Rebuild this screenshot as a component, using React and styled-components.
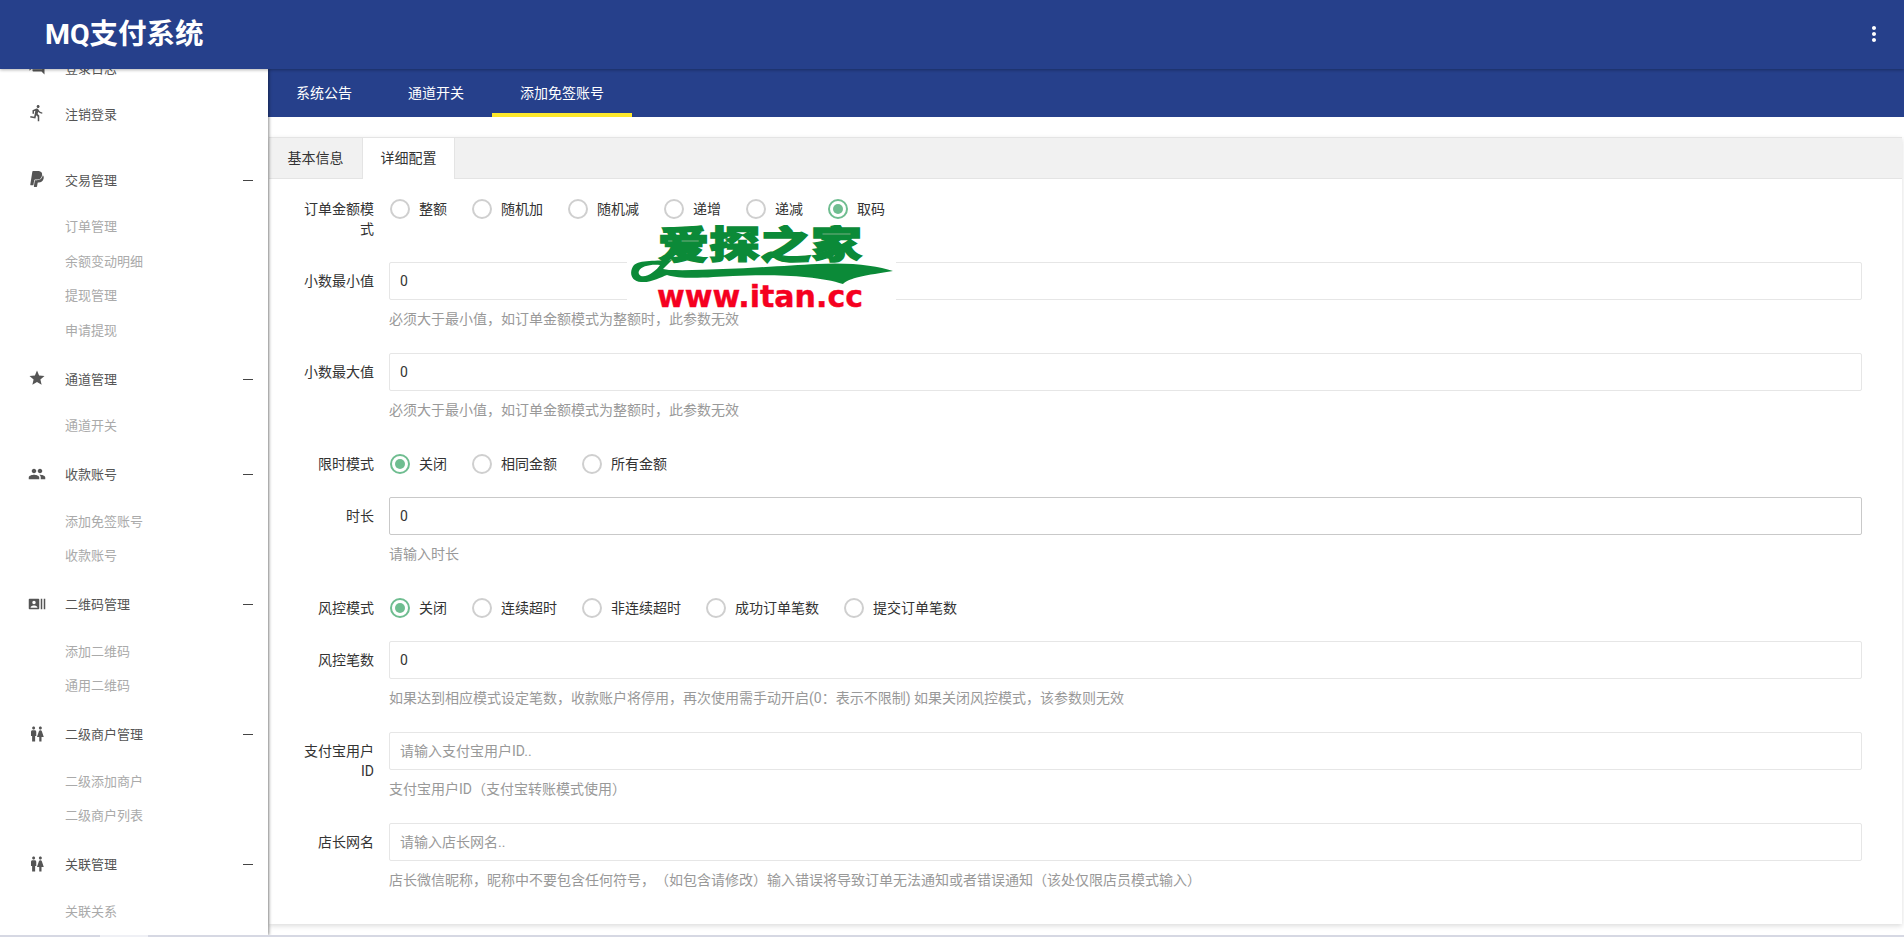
import React from "react";
import styled, { createGlobalStyle } from "styled-components";
import {
  MdDirectionsRun,
  MdForum,
  MdMoreVert,
  MdPeople,
  MdRecentActors,
  MdStar,
  MdWc,
} from "react-icons/md";
import { FaPaypal } from "react-icons/fa";

const GlobalStyle = createGlobalStyle`
  html, body, #root {
    margin: 0;
    height: 100%;
  }
  body {
    overflow: hidden;
    background: #fff;
    font-family: Roboto, "Noto Sans CJK SC", sans-serif;
    font-size: 14px;
    color: #333;
  }
  * {
    box-sizing: border-box;
  }
`;

const Page = styled.div`
  position: relative;
  display: flex;
  flex-direction: column;
  height: 937px;
  overflow: hidden;
`;

const Header = styled.header`
  position: relative;
  z-index: 3;
  flex: 0 0 68px;
  display: flex;
  align-items: center;
  justify-content: space-between;
  padding: 0 18px 0 45px;
  background: #26408b;
  color: #fff;
  box-shadow: 0 1px 3px rgba(0, 0, 0, 0.3);
`;

const Brand = styled.div`
  font-size: 28.5px;
  font-weight: 700;
  line-height: 68px;
  margin-top: 1px;
`;

const MenuButton = styled.div`
  display: flex;
  font-size: 24px;
  color: #fff;
  margin-top: -2px;
`;

const Body = styled.div`
  flex: 1;
  min-height: 0;
  display: flex;
`;

const Sidebar = styled.aside`
  position: relative;
  z-index: 2;
  flex: 0 0 268px;
  overflow: hidden;
  background: #fff;
  box-shadow: 1px 0 3px rgba(0, 0, 0, 0.45);
`;

const SideList = styled.nav`
  margin-top: -25px;
`;

const TopItem = styled.div`
  display: flex;
  align-items: center;
  height: 46px;
  padding-left: 28px;
  gap: 19px;
  font-size: 13px;
  color: #555;
  svg {
    flex: 0 0 18px;
    font-size: 18px;
  }
`;

const TopGroup = styled.div`
  margin-bottom: 26px;
`;

const GroupHead = styled(TopItem)`
  height: 34px;
  padding-right: 15px;
`;

const GroupName = styled.span`
  flex: 1;
`;

const Minus = styled.span`
  width: 10px;
  height: 1px;
  background: #444;
  margin-top: 2px;
`;

const SubList = styled.div`
  padding: 14px 0 13px 65px;
`;

const SubItem = styled.div`
  height: 34.5px;
  line-height: 34.5px;
  font-size: 13px;
  color: #aaa;
`;

const Main = styled.main`
  flex: 1;
  min-width: 0;
  overflow: hidden;
`;

const SubNav = styled.div`
  display: flex;
  height: 48px;
  background: #26408b;
`;

const SubNavLink = styled.a`
  display: block;
  padding: 0 28px;
  height: 48px;
  line-height: 48px;
  font-size: 14px;
  color: #fff;
  border-bottom: ${(p) => (p.$active ? "4px solid #fde82b" : "none")};
`;

const Card = styled.section`
  margin: 20px 2px 0 1px;
  background: #fff;
  box-shadow: 0 2px 5px rgba(0, 0, 0, 0.14);
`;

const TabBar = styled.div`
  display: flex;
  height: 42px;
  background: #f1f1f1;
  border-top: 1px solid #e4e4e4;
  border-bottom: 1px solid #e4e4e4;
`;

const Tab = styled.div`
  width: 93px;
  height: ${(p) => (p.$active ? "41px" : "40px")};
  line-height: 40px;
  text-align: center;
  font-size: 14px;
  color: #333;
  background: ${(p) => (p.$active ? "#fff" : "transparent")};
  border-left: 1px solid ${(p) => (p.$active ? "#e4e4e4" : "transparent")};
  border-right: 1px solid ${(p) => (p.$active ? "#e4e4e4" : "transparent")};
`;

const Form = styled.form`
  padding: 10px 40px 10px 30px;
`;

const Row = styled.div`
  display: grid;
  grid-template-columns: 75px 1fr;
  column-gap: 15px;
  margin-bottom: ${(p) => (p.$radio ? "23px" : "24px")};
  padding-top: ${(p) => (p.$radio ? "10px" : "0")};
`;

const Label = styled.label`
  display: block;
  text-align: right;
  font-size: 14px;
  line-height: 20px;
  color: #333;
  padding-top: ${(p) => (p.$radio ? "0" : "9px")};
`;

const TextInput = styled.input`
  display: block;
  width: 100%;
  height: 38px;
  padding: 0 10px;
  font: inherit;
  color: #333;
  background: #fff;
  border: 1px solid ${(p) => (p.$focused ? "#c9c9c9" : "#e6e6e6")};
  border-radius: 2px;
  outline: none;
  &::placeholder {
    color: #999;
    opacity: 1;
  }
`;

const Help = styled.div`
  margin-top: 9px;
  font-size: 14px;
  line-height: 20px;
  color: #999;
  text-spacing-trim: space-all;
`;

const RadioGroup = styled.div`
  display: flex;
  margin-left: 1px;
  height: 20px;
`;

const RadioItem = styled.div`
  display: flex;
  align-items: center;
  gap: 9px;
  margin-right: 25px;
  font-size: 14px;
  line-height: 20px;
  color: #333;
`;

const RadioMark = styled.span`
  position: relative;
  width: 20px;
  height: 20px;
  border-radius: 50%;
  border: 2px solid ${(p) => (p.$on ? "#6fbd90" : "#cfcfcf")};
  &::after {
    content: "";
    display: ${(p) => (p.$on ? "block" : "none")};
    position: absolute;
    left: 3px;
    top: 3px;
    width: 10px;
    height: 10px;
    border-radius: 50%;
    background: #6fbd90;
  }
`;

const SubmitButton = styled.button`
  display: block;
  width: 91px;
  height: 36px;
  margin: 11px 0 0 110px;
  border: none;
  border-radius: 2px;
  background: #009f8b;
`;

const ScrollTrack = styled.div`
  position: relative;
  z-index: 4;
  flex: 0 0 2px;
  background: #d6d8e3;
`;

const ScrollThumb = styled.div`
  width: 48px;
  height: 2px;
  margin-left: 100px;
  background: #eff0f5;
`;

const Watermark = styled.div`
  position: absolute;
  z-index: 5;
  left: 627px;
  top: 225px;
  width: 269px;
  height: 85px;
  background: #fff;
`;

const sideGroups = [
  { name: "交易管理", icon: <FaPaypal />, items: ["订单管理", "余额变动明细", "提现管理", "申请提现"] },
  { name: "通道管理", icon: <MdStar />, items: ["通道开关"] },
  { name: "收款账号", icon: <MdPeople />, items: ["添加免签账号", "收款账号"] },
  { name: "二维码管理", icon: <MdRecentActors />, items: ["添加二维码", "通用二维码"] },
  { name: "二级商户管理", icon: <MdWc />, items: ["二级添加商户", "二级商户列表"] },
  { name: "关联管理", icon: <MdWc />, items: ["关联关系"] },
];

const RadioRow = ({ label, options, checked }) => (
  <Row $radio>
    <Label $radio>{label}</Label>
    <RadioGroup>
      {options.map((o) => (
        <RadioItem key={o}>
          <RadioMark $on={o === checked} />
          {o}
        </RadioItem>
      ))}
    </RadioGroup>
  </Row>
);

const InputRow = ({ label, value, placeholder, help, focused }) => (
  <Row>
    <Label>{label}</Label>
    <div>
      <TextInput defaultValue={value} placeholder={placeholder} $focused={focused} />
      <Help>{help}</Help>
    </div>
  </Row>
);

const App = () => {
  return (
    <Page>
      <GlobalStyle />
      <Header>
        <Brand>MQ支付系统</Brand>
        <MenuButton>
          <MdMoreVert />
        </MenuButton>
      </Header>
      <Body>
        <Sidebar>
          <SideList>
            <TopGroup>
              <TopItem>
                <MdForum />
                登录日志
              </TopItem>
              <TopItem>
                <MdDirectionsRun />
                注销登录
              </TopItem>
            </TopGroup>
            {sideGroups.map((g) => (
              <div key={g.name}>
                <GroupHead>
                  {g.icon}
                  <GroupName>{g.name}</GroupName>
                  <Minus />
                </GroupHead>
                <SubList>
                  {g.items.map((i) => (
                    <SubItem key={i}>{i}</SubItem>
                  ))}
                </SubList>
              </div>
            ))}
          </SideList>
        </Sidebar>
        <Main>
          <SubNav>
            <SubNavLink>系统公告</SubNavLink>
            <SubNavLink>通道开关</SubNavLink>
            <SubNavLink $active>添加免签账号</SubNavLink>
          </SubNav>
          <Card>
            <TabBar>
              <Tab>基本信息</Tab>
              <Tab $active>详细配置</Tab>
            </TabBar>
            <Form>
              <RadioRow
                label="订单金额模式"
                options={["整额", "随机加", "随机减", "递增", "递减", "取码"]}
                checked="取码"
              />
              <InputRow label="小数最小值" value="0" help="必须大于最小值，如订单金额模式为整额时，此参数无效" />
              <InputRow label="小数最大值" value="0" help="必须大于最小值，如订单金额模式为整额时，此参数无效" />
              <RadioRow label="限时模式" options={["关闭", "相同金额", "所有金额"]} checked="关闭" />
              <InputRow label="时长" value="0" help="请输入时长" focused />
              <RadioRow
                label="风控模式"
                options={["关闭", "连续超时", "非连续超时", "成功订单笔数", "提交订单笔数"]}
                checked="关闭"
              />
              <InputRow
                label="风控笔数"
                value="0"
                help="如果达到相应模式设定笔数，收款账户将停用，再次使用需手动开启(0：表示不限制) 如果关闭风控模式，该参数则无效"
              />
              <InputRow
                label="支付宝用户ID"
                placeholder="请输入支付宝用户ID.."
                help="支付宝用户ID（支付宝转账模式使用）"
              />
              <InputRow
                label="店长网名"
                placeholder="请输入店长网名.."
                help="店长微信昵称，昵称中不要包含任何符号，（如包含请修改）输入错误将导致订单无法通知或者错误通知（该处仅限店员模式输入）"
              />
            </Form>
          </Card>
          <SubmitButton type="button" aria-label="submit" />
        </Main>
      </Body>
      <ScrollTrack>
        <ScrollThumb />
      </ScrollTrack>
      <Watermark>
        <svg width="269" height="85" viewBox="0 0 269 85">
          <text
            x="31"
            y="33"
            fontFamily="'Noto Sans CJK SC', sans-serif"
            fontWeight="900"
            fontSize="38"
            fill="#0b8a38"
            stroke="#0b8a38"
            strokeWidth="1.4"
            textLength="204"
            lengthAdjust="spacingAndGlyphs"
          >
            爱探之家
          </text>
          <path
            fillRule="evenodd"
            fill="#0b8a38"
            d="M45 35 C30 36 12 35 7 40 C2 46 3 56 14 57 C24 58 34 52 40 50 C55 55 85 52 106 51 C140 49 190 50 216 59 C221 53 240 50 266 46 C250 41 225 37 190 39 C150 41 90 46 42 45 L36 44 Z M12 46 C14 41 24 39 33 40 C30 45 20 53 14 51 C12 50 11 48 12 46 Z"
          />
          <text
            x="30"
            y="82"
            fontFamily="'DejaVu Sans', sans-serif"
            fontWeight="700"
            fontSize="30"
            fill="#f5001f"
            stroke="#f5001f"
            strokeWidth="0.4"
            textLength="206"
            lengthAdjust="spacingAndGlyphs"
          >
            www.itan.cc
          </text>
        </svg>
      </Watermark>
    </Page>
  );
};

export default App;
